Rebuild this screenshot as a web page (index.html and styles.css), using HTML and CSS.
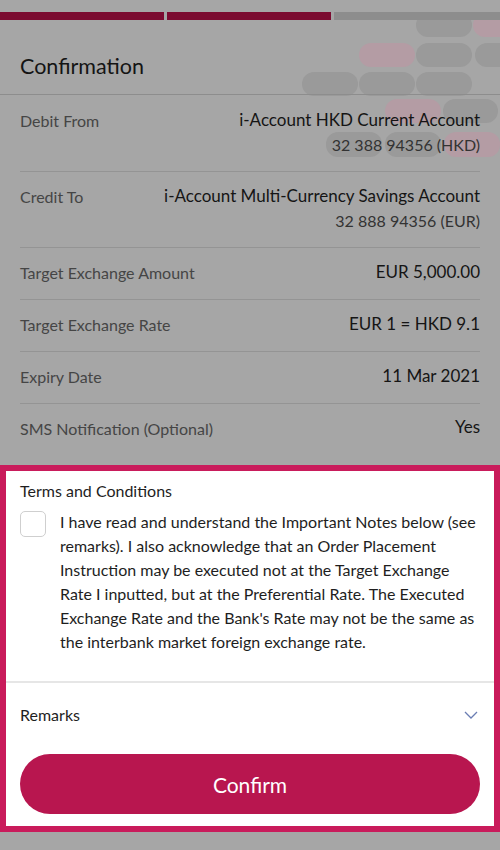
FILE: index.html
```html
<!DOCTYPE html>
<html lang="en">
<head>
<meta charset="utf-8">
<title>Confirmation</title>
<link rel="stylesheet" href="styles.css">
</head>
<body>
<div class="page">
  <svg class="deco" width="220" height="170" viewBox="0 0 220 170" aria-hidden="true">
    <rect x="136" y="13" width="56" height="24" rx="12" class="pg"/>
    <rect x="193" y="13" width="56" height="24" rx="12" class="pp"/>
    <rect x="79" y="43" width="56" height="24" rx="12" class="pp"/>
    <rect x="136" y="43" width="56" height="24" rx="12" class="pg"/>
    <rect x="195" y="43" width="56" height="24" rx="12" class="pg"/>
    <rect x="22" y="72" width="56" height="24" rx="12" class="pg"/>
    <rect x="79" y="72" width="56" height="24" rx="12" class="pg"/>
    <rect x="136" y="72" width="56" height="24" rx="12" class="pg"/>
    <rect x="105" y="99" width="56" height="24" rx="12" class="pp"/>
    <rect x="163" y="99" width="55" height="24" rx="12" class="pg"/>
    <rect x="46" y="132" width="56" height="25" rx="12" class="pg"/>
    <rect x="105" y="132" width="56" height="25" rx="12" class="pg"/>
    <rect x="164" y="132" width="56" height="25" rx="12" class="pp"/>
  </svg>

  <div class="progress">
    <span class="step done"></span>
    <span class="step done"></span>
    <span class="step todo"></span>
  </div>

  <header class="head">
    <h1 class="title">Confirmation</h1>
  </header>

  <section class="details">
    <div class="row first">
      <div class="label">Debit From</div>
      <div class="value">
        <div class="main">i-Account HKD Current Account</div>
        <div class="sub">32 388 94356 (HKD)</div>
      </div>
    </div>
    <div class="row">
      <div class="label">Credit To</div>
      <div class="value">
        <div class="main">i-Account Multi-Currency Savings Account</div>
        <div class="sub">32 888 94356 (EUR)</div>
      </div>
    </div>
    <div class="row">
      <div class="label">Target Exchange Amount</div>
      <div class="value"><div class="main">EUR 5,000.00</div></div>
    </div>
    <div class="row">
      <div class="label">Target Exchange Rate</div>
      <div class="value"><div class="main">EUR 1 = HKD 9.1</div></div>
    </div>
    <div class="row">
      <div class="label">Expiry Date</div>
      <div class="value"><div class="main">11 Mar 2021</div></div>
    </div>
    <div class="row last">
      <div class="label">SMS Notification (Optional)</div>
      <div class="value"><div class="main yes">Yes</div></div>
    </div>
  </section>

  <section class="spot">
    <div class="terms">
      <div class="terms-title">Terms and Conditions</div>
      <label class="agree">
        <span class="box"></span>
        <span class="agree-text">I have read and understand the Important Notes below (see remarks). I also acknowledge that an Order Placement Instruction may be executed not at the Target Exchange Rate I inputted, but at the Preferential Rate. The Executed Exchange Rate and the Bank's Rate may not be the same as the interbank market foreign exchange rate.</span>
      </label>
    </div>
    <div class="remarks">
      <span>Remarks</span>
      <svg class="chev" width="14" height="8" viewBox="0 0 14 8" aria-hidden="true">
        <path d="M1 1 L7 7 L13 1" fill="none" stroke="#6a7db3" stroke-width="1.3"/>
      </svg>
    </div>
    <div class="actions">
      <button class="confirm" type="button">Confirm</button>
    </div>
  </section>
</div>
</body>
</html>
```

FILE: styles.css
```css
html, body {
  margin: 0;
  padding: 0;
}
body {
  background: #a6a6a6;
  font-family: Lato, "Open Sans", "Liberation Sans", sans-serif;
  color: #161616;
}
.page {
  position: relative;
  width: 500px;
}
.deco {
  position: absolute;
  top: 0;
  right: 0;
  z-index: 0;
}
.pg { fill: #9a9a9a; }
.pp { fill: #b49ca4; }

.progress {
  position: relative;
  z-index: 1;
  display: flex;
  gap: 3px;
  padding-top: 12px;
}
.step {
  display: block;
  height: 8px;
}
.step.done {
  width: 164px;
  background: #7b0b30;
}
.step.todo {
  flex: 1;
  background: #8d8d8d;
}
.head {
  position: relative;
  z-index: 1;
  border-bottom: 1px solid #8d8d8d;
  padding: 33px 20px 15px;
}
.title {
  margin: 0;
  font-size: 21.5px;
  line-height: 26px;
  font-weight: 400;
  color: #141414;
}

.details {
  position: relative;
  z-index: 1;
  padding: 0 20px 10px;
}
.row {
  display: flex;
  justify-content: space-between;
  align-items: flex-start;
  padding: 13px 0 16px;
  border-bottom: 1px solid #949494;
}
.row.first {
  padding-top: 14px;
}
.row.last {
  border-bottom: none;
}
.label {
  font-size: 16px;
  line-height: 20px;
  padding-top: 2px;
  color: #454545;
  white-space: nowrap;
}
.value {
  text-align: right;
}
.main {
  font-size: 17px;
  line-height: 22px;
  color: #151515;
}
.main.yes {
  margin-top: -1px;
  margin-bottom: 1px;
}
.sub {
  margin-top: 4px;
  font-size: 16px;
  line-height: 20px;
  color: #333333;
}

.spot {
  position: relative;
  z-index: 2;
  background: #ffffff;
  border: 6px solid #c91b5b;
}
.terms {
  padding: 10px 14px 27px;
  border-bottom: 2px solid #e6e6e6;
}
.terms-title {
  font-size: 16px;
  line-height: 20px;
  color: #1e1e1e;
  margin-bottom: 9px;
}
.agree {
  display: flex;
  align-items: flex-start;
  gap: 14px;
}
.box {
  flex: none;
  width: 24px;
  height: 24px;
  border: 1px solid #cfcfcf;
  border-radius: 5px;
  margin-top: 1px;
  background: #fff;
}
.agree-text {
  font-size: 16px;
  line-height: 24px;
  color: #1e1e1e;
}
.remarks {
  display: flex;
  justify-content: space-between;
  align-items: center;
  padding: 22px 16px 21px 14px;
  font-size: 16px;
  line-height: 20px;
  color: #1e1e1e;
}
.actions {
  padding: 8px 14px 12px;
}
.confirm {
  display: block;
  width: 100%;
  height: 60px;
  border: none;
  border-radius: 30px;
  background: #b8164f;
  color: #ffffff;
  font-family: Lato, "Open Sans", "Liberation Sans", sans-serif;
  font-size: 21px;
}
```
